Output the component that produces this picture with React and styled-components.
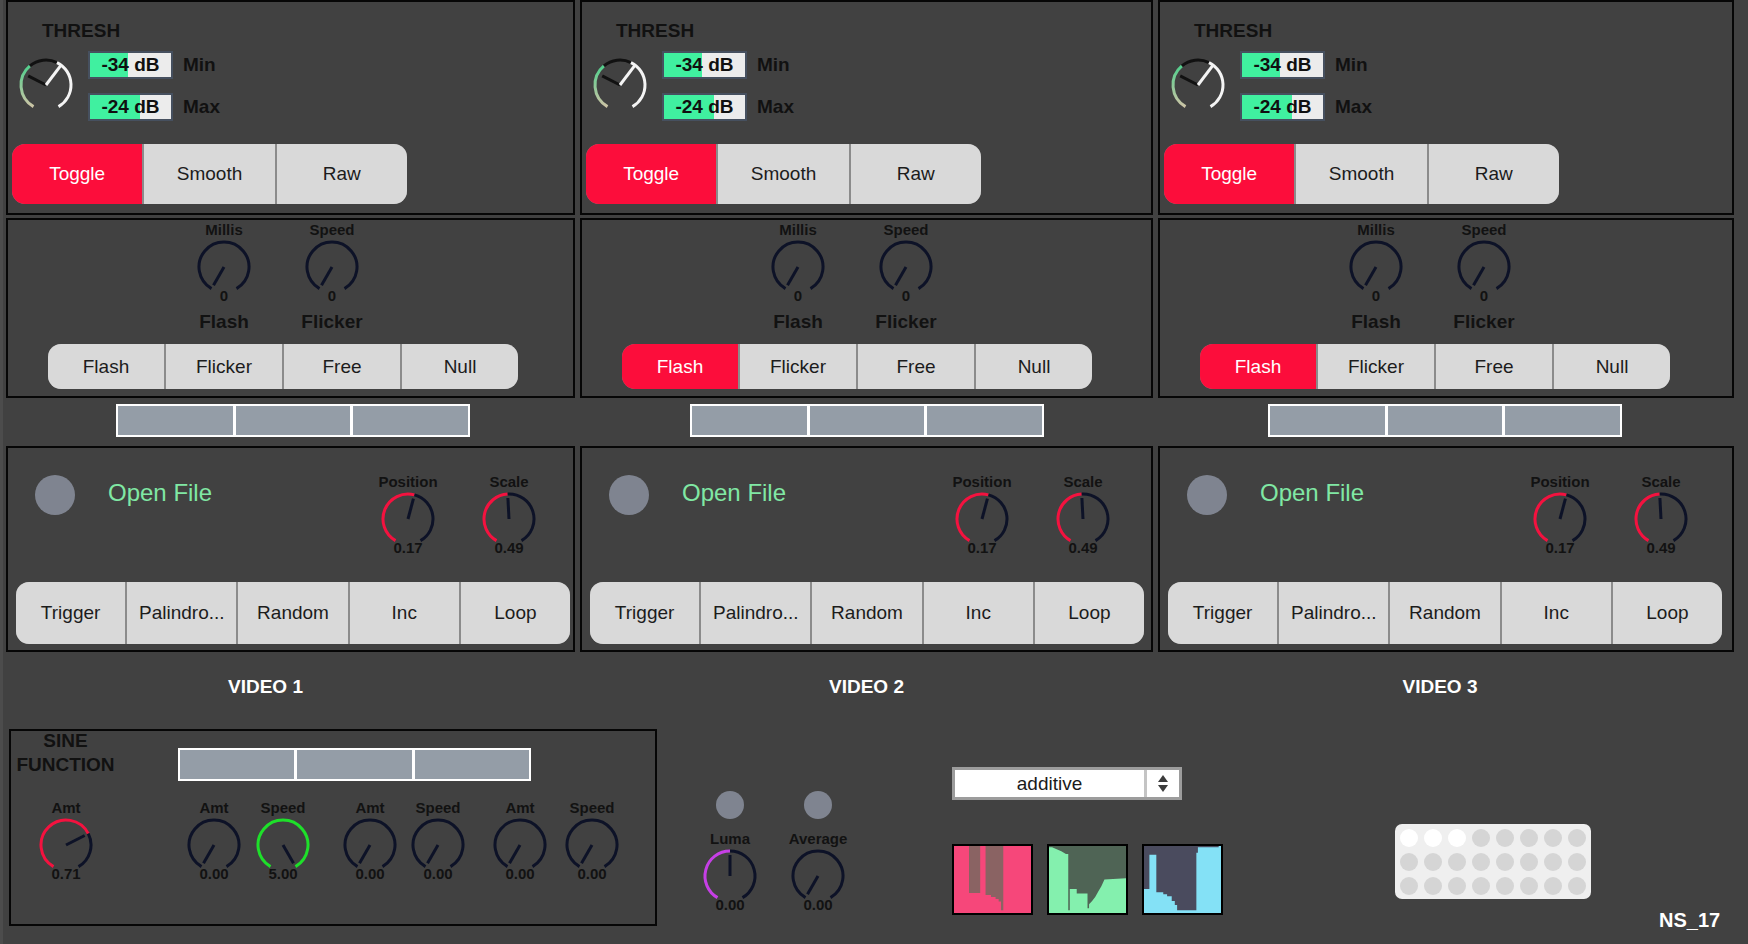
import { useId } from 'react'
import styled, { createGlobalStyle } from 'styled-components'

const NAVY = '#0d1227'
const RED = '#f4123f'

const GlobalStyle = createGlobalStyle`
  html, body { margin: 0; padding: 0; }
  body {
    background: linear-gradient(90deg, #4c4c4c 0 3px, #414141 3px);
    font-family: "Liberation Sans", Arial, sans-serif;
    color: #111;
  }
  #root { width: 1748px; height: 944px; overflow: hidden; }
`

const Page = styled.div`
  width: 1748px;
  height: 944px;
  display: flex;
  flex-direction: column;
`

const Columns = styled.div`
  display: grid;
  grid-template-columns: 569px 573px 576px;
  column-gap: 5px;
  padding-left: 6px;
`

const Column = styled.div`
  display: flex;
  flex-direction: column;
`

const Panel = styled.div`
  box-sizing: border-box;
  border: 2px solid #060606;
  height: ${p => p.$h}px;
  margin-top: ${p => p.$mt || 0}px;
  display: flex;
  flex-direction: column;
  align-items: flex-start;
`

const Title = styled.div`
  margin: 18px 0 0 34px;
  font-size: 19px;
  font-weight: bold;
  line-height: 22px;
  color: #111;
`

const DialRow = styled.div`
  display: flex;
  align-items: flex-start;
  margin-top: 9px;
`

const DialSvg = styled.svg`
  display: block;
  flex-shrink: 0;
  margin: ${p => p.$mt || 0}px 0 0 ${p => p.$ml || 0}px;
`

const Readouts = styled.div`
  display: grid;
  grid-template-columns: 85px auto;
  column-gap: 10px;
  row-gap: 14px;
  align-items: center;
  margin-left: 14px;
`

const NumBox = styled.div`
  box-sizing: border-box;
  width: 85px;
  height: 28px;
  border: 2px solid #46505f;
  background: linear-gradient(90deg, #40f0a0 ${p => p.$fill}%, #ececec ${p => p.$fill}%);
  font-size: 19px;
  font-weight: bold;
  line-height: 24px;
  text-align: center;
  color: #101010;
`

const ReadLabel = styled.div`
  font-size: 19px;
  font-weight: bold;
  color: #111;
`

const Strip = styled.div`
  display: flex;
  gap: 2px;
  flex-shrink: 0;
  width: ${p => p.$w}px;
  height: ${p => p.$h}px;
  margin: ${p => p.$mt}px 0 0 ${p => p.$ml}px;
  background: #8b8b8b;
  border-radius: 13px;
  overflow: hidden;
`

const Seg = styled.div`
  flex: 1;
  display: flex;
  align-items: center;
  justify-content: center;
  background: ${p => (p.$on ? '#fc0d3b' : '#d9d9d9')};
  color: ${p => (p.$on ? '#fff' : '#1c1c1c')};
  font-size: 19px;
  white-space: nowrap;
`

const KnobRow = styled.div`
  display: flex;
  align-items: flex-start;
  padding: ${p => p.$pt || 0}px 0 0 ${p => p.$pl || 0}px;
  gap: ${p => p.$gap || 0}px;
`

const Unit = styled.div`
  display: flex;
  flex-direction: column;
  align-items: center;
  flex-shrink: 0;
  width: ${p => p.$w || 80}px;
  margin-left: ${p => p.$ml || 0}px;
`

const KnobLabel = styled.div`
  font-size: 15px;
  font-weight: bold;
  line-height: 18px;
  color: #121212;
  white-space: nowrap;
`

const KnobValue = styled.div`
  font-size: 15px;
  font-weight: bold;
  line-height: 16px;
  margin-top: -7px;
  color: #121212;
`

const Caption = styled.div`
  font-size: 19px;
  font-weight: bold;
  line-height: 22px;
  margin-top: 7px;
  color: #121212;
`

const SegBar = styled.div`
  box-sizing: border-box;
  display: flex;
  gap: 3px;
  padding: 2px;
  width: ${p => p.$w}px;
  height: 33px;
  flex-shrink: 0;
  margin: ${p => p.$mt}px 0 0 ${p => p.$ml}px;
  background: #fff;
`

const SegCell = styled.div`
  flex: 1;
  background: #949da7;
`

const VideoTop = styled.div`
  display: grid;
  grid-template-columns: 339px 80px 80px;
  column-gap: 21px;
  padding-top: 25px;
`

const FileCell = styled.div`
  display: flex;
  align-items: flex-start;
`

const Led = styled.div`
  width: ${p => p.$d}px;
  height: ${p => p.$d}px;
  border-radius: 50%;
  background: #7f8490;
  flex-shrink: 0;
  margin: ${p => p.$mt || 0}px 0 0 ${p => p.$ml || 0}px;
`

const OpenFile = styled.div`
  margin: 6px 0 0 33px;
  font-size: 24px;
  line-height: 28px;
  color: #80e8a4;
  white-space: nowrap;
`

const VideoLabel = styled.div`
  margin-top: 24px;
  padding-right: ${p => p.$shift}px;
  text-align: center;
  font-size: 19px;
  font-weight: bold;
  line-height: 22px;
  color: #fff;
`

const BottomRow = styled.div`
  display: flex;
  align-items: flex-start;
  margin-top: 31px;
`

const SinePanel = styled.div`
  box-sizing: border-box;
  width: 648px;
  height: 197px;
  margin-left: 9px;
  border: 2px solid #060606;
  display: flex;
  flex-direction: column;
`

const SineTop = styled.div`
  display: flex;
  align-items: flex-start;
`

const SineTitle = styled.div`
  width: 103px;
  margin: -2px 0 0 3px;
  text-align: center;
  font-size: 19px;
  font-weight: bold;
  line-height: 24px;
  color: #111;
`

const LumaGroup = styled.div`
  display: flex;
  gap: 8px;
  margin: 62px 0 0 33px;
`

const LumaLabel = styled(KnobLabel)`
  margin-top: 11px;
`

const MixGroup = styled.div`
  display: flex;
  flex-direction: column;
  margin: 38px 0 0 94px;
`

const Select = styled.div`
  box-sizing: border-box;
  width: 230px;
  height: 33px;
  border: 3px solid #9c9c9c;
  background: #fff;
  display: flex;
`

const SelectText = styled.div`
  flex: 1;
  text-align: center;
  font-size: 19px;
  line-height: 27px;
  color: #1a1a1a;
`

const SelectArrows = styled.div`
  width: 32px;
  border-left: 3px solid #c4c4c4;
  display: flex;
  flex-direction: column;
  align-items: center;
  justify-content: center;
  gap: 3px;
`

const Scopes = styled.div`
  display: flex;
  gap: 14px;
  margin-top: 44px;
`

const Scope = styled.div`
  box-sizing: border-box;
  width: 81px;
  height: 71px;
  border: 2px solid #000;
  background: ${p => p.$bg};
  svg { display: block; }
`

const Matrix = styled.div`
  display: grid;
  grid-template-columns: repeat(8, 18px);
  gap: 6px;
  padding: 5px 5px 4px 5px;
  margin: 95px 0 0 172px;
  background: #efefef;
  border-radius: 7px;
`

const Dot = styled.div`
  width: 18px;
  height: 18px;
  border-radius: 50%;
  background: ${p => (p.$on ? '#ffffff' : '#d5d5d5')};
`

const Tag = styled.div`
  margin: 180px 0 0 68px;
  font-size: 20px;
  font-weight: bold;
  line-height: 22px;
  color: #fff;
`

const polar = (r, deg) => {
  const a = ((deg - 90) * Math.PI) / 180
  return [28 + r * Math.cos(a), 28 + r * Math.sin(a)]
}

const arcPath = (r, a0, a1) => {
  const [x0, y0] = polar(r, a0)
  const [x1, y1] = polar(r, a1)
  const large = a1 - a0 > 180 ? 1 : 0
  return `M${x0.toFixed(2)} ${y0.toFixed(2)} A${r} ${r} 0 ${large} 1 ${x1.toFixed(2)} ${y1.toFixed(2)}`
}

function Dial({ value = 0, color = NAVY }) {
  const angle = -150 + 300 * value
  const [nx, ny] = polar(21, angle)
  return (
    <DialSvg width="56" height="56" viewBox="0 0 56 56">
      {value > 0 && <path d={arcPath(25, -150, angle)} stroke={color} strokeWidth="3" fill="none" />}
      {value < 1 && <path d={arcPath(25, angle, 150)} stroke={NAVY} strokeWidth="3" fill="none" />}
      <line x1="28" y1="28" x2={nx} y2={ny} stroke={NAVY} strokeWidth="3" />
    </DialSvg>
  )
}

function ThreshDial() {
  const id = 'g' + useId().replace(/[^a-zA-Z0-9]/g, '')
  const [bx, by] = polar(20, -63)
  const [wx, wy] = polar(25, 37)
  return (
    <DialSvg width="56" height="56" viewBox="0 0 56 56" $mt={6} $ml={10}>
      <defs>
        <linearGradient id={id} x1="0" y1="50" x2="0" y2="10" gradientUnits="userSpaceOnUse">
          <stop offset="0" stopColor="#cdc4a6" />
          <stop offset="1" stopColor="#55cf8d" />
        </linearGradient>
      </defs>
      <path d={arcPath(25, -150, -40)} stroke={`url(#${id})`} strokeWidth="3" fill="none" />
      <path d={arcPath(25, -40, 26)} stroke="#111" strokeWidth="3" fill="none" />
      <path d={arcPath(25, 26, 150)} stroke="#f4f4f4" strokeWidth="3" fill="none" />
      <line x1="28" y1="28" x2={bx} y2={by} stroke="#111" strokeWidth="3" />
      <line x1="28" y1="28" x2={wx} y2={wy} stroke="#f4f4f4" strokeWidth="3" />
    </DialSvg>
  )
}

function Knob({ label, value, v, color, caption, w, ml }) {
  return (
    <Unit $w={w} $ml={ml}>
      <KnobLabel>{label}</KnobLabel>
      <Dial value={v} color={color} />
      <KnobValue>{value}</KnobValue>
      {caption && <Caption>{caption}</Caption>}
    </Unit>
  )
}

function Bar({ w, mt, ml }) {
  return (
    <SegBar $w={w} $mt={mt} $ml={ml}>
      <SegCell />
      <SegCell />
      <SegCell />
    </SegBar>
  )
}

function VideoColumn({ n, flashOn, shift }) {
  return (
    <Column>
      <Panel $h={215}>
        <Title>THRESH</Title>
        <DialRow>
          <ThreshDial />
          <Readouts>
            <NumBox $fill={47}>-34 dB</NumBox>
            <ReadLabel>Min</ReadLabel>
            <NumBox $fill={62}>-24 dB</NumBox>
            <ReadLabel>Max</ReadLabel>
          </Readouts>
        </DialRow>
        <Strip $w={395} $h={60} $mt={23} $ml={4}>
          {['Toggle', 'Smooth', 'Raw'].map((t, i) => (
            <Seg key={t} $on={i === 0}>{t}</Seg>
          ))}
        </Strip>
      </Panel>

      <Panel $h={180} $mt={3}>
        <KnobRow $pt={1} $pl={176} $gap={28}>
          <Knob label="Millis" value="0" v={0} caption="Flash" />
          <Knob label="Speed" value="0" v={0} caption="Flicker" />
        </KnobRow>
        <Strip $w={470} $h={45} $mt={11} $ml={40}>
          {['Flash', 'Flicker', 'Free', 'Null'].map((t, i) => (
            <Seg key={t} $on={i === flashOn}>{t}</Seg>
          ))}
        </Strip>
      </Panel>

      <Bar w={354} mt={6} ml={110} />

      <Panel $h={206} $mt={9}>
        <VideoTop>
          <FileCell>
            <Led $d={40} $mt={2} $ml={27} />
            <OpenFile>Open File</OpenFile>
          </FileCell>
          <Knob label="Position" value="0.17" v={0.55} color={RED} />
          <Knob label="Scale" value="0.49" v={0.49} color={RED} />
        </VideoTop>
        <Strip $w={554} $h={62} $mt={26} $ml={8}>
          {['Trigger', 'Palindro...', 'Random', 'Inc', 'Loop'].map(t => (
            <Seg key={t}>{t}</Seg>
          ))}
        </Strip>
      </Panel>

      <VideoLabel $shift={shift}>VIDEO {n}</VideoLabel>
    </Column>
  )
}

const sineKnobs = [
  { label: 'Amt', value: '0.71', v: 0.71, color: RED, ml: 23 },
  { label: 'Amt', value: '0.00', v: 0, ml: 84 },
  { label: 'Speed', value: '5.00', v: 1, color: '#1ee02a', ml: 5 },
  { label: 'Amt', value: '0.00', v: 0, ml: 23 },
  { label: 'Speed', value: '0.00', v: 0, ml: 4 },
  { label: 'Amt', value: '0.00', v: 0, ml: 18 },
  { label: 'Speed', value: '0.00', v: 0, ml: 8 },
]

const scopes = [
  {
    bg: '#8a6363',
    fg: '#f6477a',
    pts: '0,0 19.5,0 19.5,70 34,70 34,0 41,0 41,73 48,73 48,76 54,76 54,79 58,79 58,83 61,83 61,96 64,96 64,0 100,0 100,100 0,100',
  },
  {
    bg: '#4f6455',
    fg: '#84f0ae',
    pts: '0,100 0,2 4,2 10,5 16,8 22,12 25,12 25,96 27,96 27,64 36,64 36,71 50,71 50,93 52,93 52,87 56,82 60,76 64,68 68,60 72,50 100,48 100,100',
  },
  {
    bg: '#4a4b5e',
    fg: '#84e1f6',
    pts: '0,100 0,64 7,64 7,13 16,13 16,69 25,69 25,72 30,72 30,75 36,75 36,82 40,82 40,88 43,88 43,96 68,96 68,10 70,10 70,2 97,2 97,0 100,0 100,100',
  },
]

export default function App() {
  return (
    <>
      <GlobalStyle />
      <Page>
        <Columns>
          <VideoColumn n={1} flashOn={-1} shift={50} />
          <VideoColumn n={2} flashOn={0} shift={0} />
          <VideoColumn n={3} flashOn={0} shift={12} />
        </Columns>

        <BottomRow>
          <SinePanel>
            <SineTop>
              <SineTitle>
                SINE
                <br />
                FUNCTION
              </SineTitle>
              <Bar w={353} mt={17} ml={61} />
            </SineTop>
            <KnobRow $pt={18}>
              {sineKnobs.map((k, i) => (
                <Knob key={i} w={64} {...k} />
              ))}
            </KnobRow>
          </SinePanel>

          <LumaGroup>
            <Unit>
              <Led $d={28} />
              <LumaLabel>Luma</LumaLabel>
              <Dial value={0.5} color="#c63fe6" />
              <KnobValue>0.00</KnobValue>
            </Unit>
            <Unit>
              <Led $d={28} />
              <LumaLabel>Average</LumaLabel>
              <Dial value={0} />
              <KnobValue>0.00</KnobValue>
            </Unit>
          </LumaGroup>

          <MixGroup>
            <Select>
              <SelectText>additive</SelectText>
              <SelectArrows>
                <svg width="10" height="7" viewBox="0 0 10 7">
                  <path d="M5 0 L10 7 L0 7 Z" fill="#3c3c3c" />
                </svg>
                <svg width="10" height="7" viewBox="0 0 10 7">
                  <path d="M0 0 L10 0 L5 7 Z" fill="#3c3c3c" />
                </svg>
              </SelectArrows>
            </Select>
            <Scopes>
              {scopes.map((s, i) => (
                <Scope key={i} $bg={s.bg}>
                  <svg width="77" height="67" viewBox="0 0 100 100" preserveAspectRatio="none">
                    <polygon points={s.pts} fill={s.fg} />
                  </svg>
                </Scope>
              ))}
            </Scopes>
          </MixGroup>

          <Matrix>
            {Array.from({ length: 24 }, (_, i) => (
              <Dot key={i} $on={i < 3} />
            ))}
          </Matrix>

          <Tag>NS_17</Tag>
        </BottomRow>
      </Page>
    </>
  )
}
